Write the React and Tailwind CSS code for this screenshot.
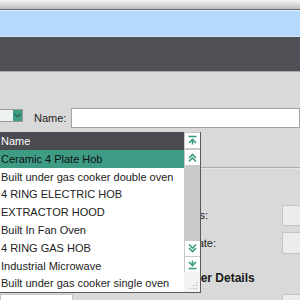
import React from "react";

const items = [
  "Ceramic 4 Plate Hob",
  "Built under gas cooker double oven",
  "4 RING ELECTRIC HOB",
  "EXTRACTOR HOOD",
  "Built In Fan Oven",
  "4 RING GAS HOB",
  "Industrial Microwave",
  "Built under gas cooker single oven",
];

const ScrollBtn = ({ kind }) => (
  <div className="w-[15px] h-[15px] bg-white flex items-center justify-center">
    <svg width="11" height="11" viewBox="0 0 11 11" fill="none" stroke="#3d9b84" strokeWidth="1.6">
      {kind === "top" && (
        <>
          <path d="M1.5 1.5h8" />
          <path d="M2 8l3.5-3.5L9 8" />
          <path d="M5.5 4.5v5" />
        </>
      )}
      {kind === "up" && (
        <>
          <path d="M2 6l3.5-3.5L9 6" />
          <path d="M2 9.5l3.5-3.5L9 9.5" />
        </>
      )}
      {kind === "down" && (
        <>
          <path d="M2 1.5l3.5 3.5L9 1.5" />
          <path d="M2 5l3.5 3.5L9 5" />
        </>
      )}
      {kind === "bottom" && (
        <>
          <path d="M2 3l3.5 3.5L9 3" />
          <path d="M5.5 1.5v5" />
          <path d="M1.5 9.5h8" />
        </>
      )}
    </svg>
  </div>
);

const App = () => {
  return (
    <div className="relative w-[300px] h-[300px] overflow-hidden bg-[#d9d9d9] text-[11px] text-[#222]" style={{ fontFamily: '"Liberation Sans", Arial, sans-serif' }}>
      {/* window chrome */}
      <div className="h-[10px] bg-gradient-to-b from-[#f6f6f6] to-[#bdbdbd] border-b border-[#6a6a6a]" />
      <div className="h-[27px] bg-[#b5d9fb] border-t border-[#dcedfd] border-b border-b-[#d6e9fb]" />
      <div className="h-[35px] bg-[#4f5055] border-b border-[#a9a9a9]" />

      {/* form */}
      <div className="flex flex-col">
        <div className="flex items-center h-[20px] mt-[36px]">
          <div className="flex self-start mt-[1px] h-[13px] border border-[#9a9a9a] -ml-[1px]">
            <div className="w-[13px] bg-[#edf3f1]" />
            <div className="w-[9px] bg-[#3e9c85] flex items-center justify-center">
              <svg width="7" height="5" viewBox="0 0 7 5" fill="none" stroke="#2c6b5c" strokeWidth="1.4">
                <path d="M0.5 0.8l3 3 3-3" />
              </svg>
            </div>
          </div>
          <span className="ml-[11px]">Name:</span>
          <div className="ml-[5px] flex-1 h-[20px] bg-white border border-[#a3a3a3]" />
        </div>

        <div className="mt-[39px] border-t border-[#ababab] border-b border-b-[#e6e6e6]" />

        <div className="flex items-center mt-[36px] h-[21px]">
          <div className="w-[208px] text-right">Status:</div>
          <div className="ml-auto w-[18px] h-[21px] bg-[#ececec] border border-[#c4c4c4] border-r-0" />
        </div>
        <div className="flex items-center mt-[6px] h-[22px]">
          <div className="w-[216px] text-right">Install Date:</div>
          <div className="ml-auto w-[18px] h-[22px] bg-[#ececec] border border-[#c4c4c4] border-r-0" />
        </div>
        <div className="mt-[15px] pl-[180px] font-bold text-[12px] text-[#1a1a1a]">Other Details</div>
        <div className="flex mt-[7px]">
          <div className="w-[73px] h-[10px] bg-white border border-[#c4c4c4] ml-0" />
          <div className="ml-auto w-[18px] h-[10px] bg-[#ececec] border border-[#c4c4c4] border-r-0" />
        </div>
      </div>

      {/* dropdown list */}
      <div className="absolute left-0 top-[132px] w-[201px] h-[161px] flex bg-white border-r border-b border-[#5a5a5a]">
        <div className="flex-1 flex flex-col">
          <div className="h-[18px] bg-[#4b4c51] text-white flex items-center pl-[1px]">Name</div>
          {items.map((name, i) => (
            <div
              key={i}
              className={
                "h-[18px] flex items-center pl-[1px] pt-[1px] whitespace-nowrap " +
                (i === 0 ? "bg-[#3e9c85] text-[#111]" : "text-[#222]")
              }
            >
              {name}
            </div>
          ))}
        </div>
        <div className="w-[16px] flex flex-col bg-[#c9c9c9] pl-[1px]">
          <div className="mt-[1px]">
            <ScrollBtn kind="top" />
          </div>
          <div className="mt-[2px]">
            <ScrollBtn kind="up" />
          </div>
          <div className="flex-1" />
          <div className="bg-white">
            <ScrollBtn kind="down" />
          </div>
          <div className="mt-[1px]">
            <ScrollBtn kind="bottom" />
          </div>
          <div className="h-[20px] bg-[#f2f2f2] -ml-[1px] relative">
            <svg className="absolute right-[2px] bottom-[2px]" width="8" height="8" viewBox="0 0 8 8" fill="#a8a8a8">
              <rect x="6" y="0" width="1" height="1" />
              <rect x="6" y="3" width="1" height="1" />
              <rect x="3" y="3" width="1" height="1" />
              <rect x="6" y="6" width="1" height="1" />
              <rect x="3" y="6" width="1" height="1" />
              <rect x="0" y="6" width="1" height="1" />
            </svg>
          </div>
        </div>
      </div>
    </div>
  );
};

export default App;
